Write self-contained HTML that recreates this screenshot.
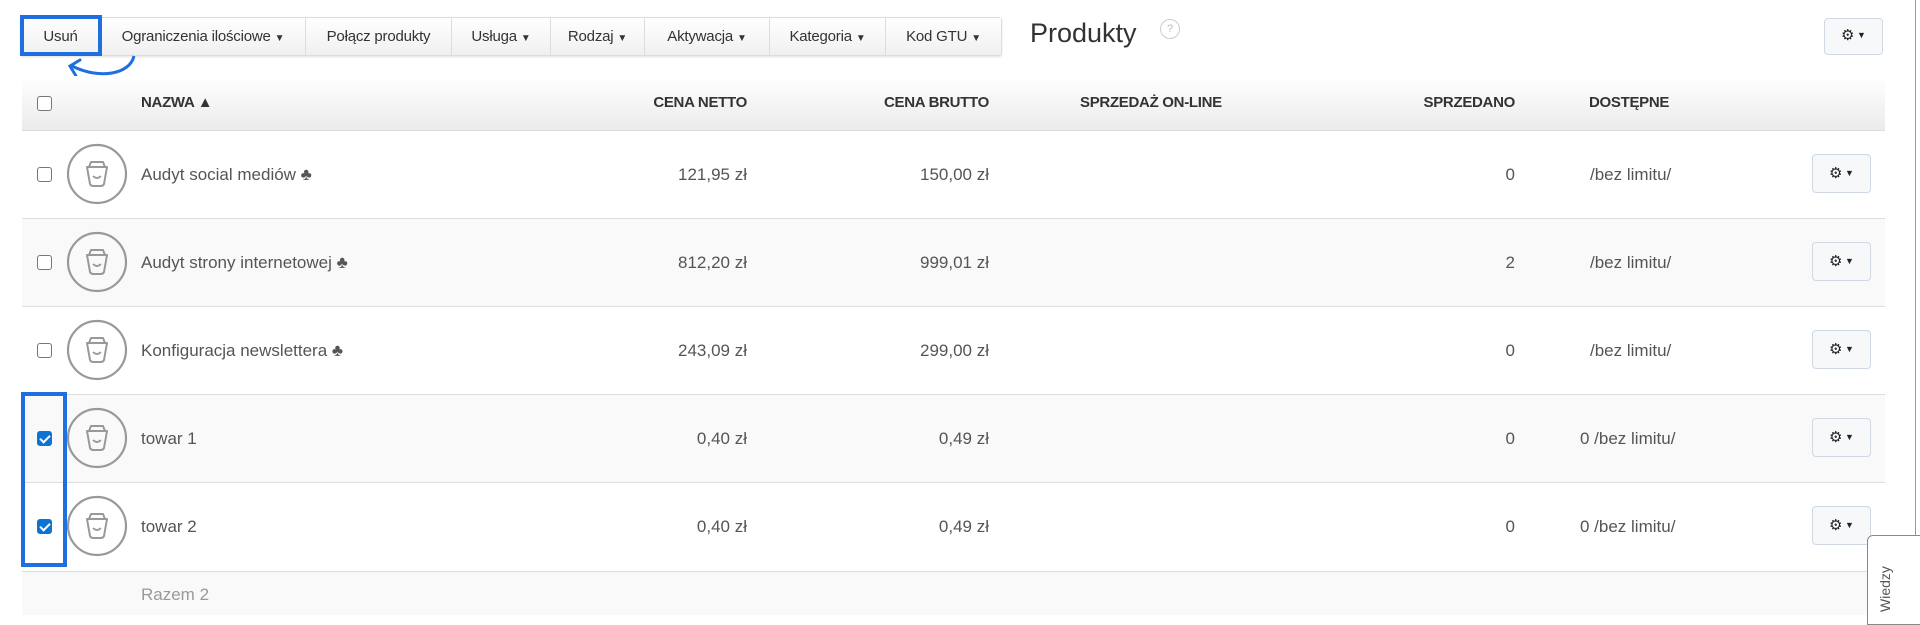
<!DOCTYPE html>
<html><head><meta charset="utf-8"><style>
*{box-sizing:border-box;margin:0;padding:0}
body{width:1920px;height:615px;background:#fff;font-family:"Liberation Sans",Arial,sans-serif;color:#555;position:relative;overflow:hidden}
.abs{position:absolute}
.tb{position:absolute;top:17px;height:39px;left:20px;display:flex;border:1px solid #ddd;border-radius:3px;background:#f5f5f5;box-shadow:0 1px 2px rgba(0,0,0,.12)}
.tb div{height:37px;line-height:37px;font-size:15px;color:#333;text-align:center;border-right:1px solid #ddd;background:linear-gradient(#fff,#f0f0f0);white-space:nowrap;letter-spacing:-0.2px}
.tb div:last-child{border-right:none}
.car{font-size:10px}
.hdr{position:absolute;left:22px;top:76px;width:1863px;height:54px;background:linear-gradient(#fff,#ebebeb)}
.h{position:absolute;top:94px;font-size:15px;font-weight:bold;color:#333;letter-spacing:-0.3px}
.row{position:absolute;left:22px;width:1863px;border-top:1px solid #ddd}
.cb{position:absolute;left:37px;width:15px;height:15px;border:1px solid #777;border-radius:3px;background:#fff}
.cbc{background:#0b74d4;border-color:#0b74d4}
.cbc:after{content:"";position:absolute;left:4px;top:1px;width:4px;height:8px;border:solid #fff;border-width:0 2px 2px 0;transform:rotate(45deg)}
.t{position:absolute;font-size:17px;color:#555}
.gb{position:absolute;width:59px;height:39px;border:1px solid #cfd8e3;border-radius:4px;background:#f6f8fa}
</style></head><body>
<div class="tb">
<div style="width:80px">Usuń</div>
<div style="width:205px">Ograniczenia ilościowe <span class="car">▼</span></div>
<div style="width:146px">Połącz produkty</div>
<div style="width:99px">Usługa <span class="car">▼</span></div>
<div style="width:94px">Rodzaj <span class="car">▼</span></div>
<div style="width:125px">Aktywacja <span class="car">▼</span></div>
<div style="width:116px">Kategoria <span class="car">▼</span></div>
<div style="width:115px">Kod GTU <span class="car">▼</span></div>
</div>
<div class="abs" style="left:20px;top:15px;width:82px;height:41px;border:4px solid #1f6fe0"></div>
<svg class="abs" style="left:50px;top:52px" width="100" height="40"><path d="M84 4 C80 22 50 28 22 14" fill="none" stroke="#1f6fe0" stroke-width="3"/><path d="M30 8 L20 14 L26 24" fill="none" stroke="#1f6fe0" stroke-width="3" stroke-linecap="round"/></svg>
<div class="abs" style="left:1030px;top:18px;font-size:27px;color:#333">Produkty</div>
<div class="abs" style="left:1160px;top:19px;width:20px;height:20px;border:1px solid #ccc;border-radius:50%;font-size:11px;color:#bbb;text-align:center;line-height:18px">?</div>
<div class="gb" style="left:1824px;top:18px;height:37px"></div>
<div class="hdr"></div>
<div class="cb" style="top:96px"></div>
<div class="h" style="left:141px">NAZWA ▲</div>
<div class="h" style="left:600px;width:147px;text-align:right">CENA NETTO</div>
<div class="h" style="left:800px;width:189px;text-align:right">CENA BRUTTO</div>
<div class="h" style="left:1080px">SPRZEDAŻ ON-LINE</div>
<div class="h" style="left:1300px;width:215px;text-align:right">SPRZEDANO</div>
<div class="h" style="left:1589px">DOSTĘPNE</div>
<div id="rows"></div>
<div class="row" style="top:571px;height:44px;background:#f9f9f9"></div>
<div class="t" style="left:141px;top:585px;color:#999">Razem 2</div>
<div class="abs" style="left:21px;top:392px;width:46px;height:175px;border:4px solid #1f6fe0"></div>
<div class="abs" style="left:1915px;top:0;width:1px;height:615px;background:#999"></div>
<div class="abs" style="left:1867px;top:535px;width:60px;height:90px;border:1px solid #888;border-radius:6px 0 0 0;background:#fff"></div>
<div class="abs" style="left:1877px;top:612px;font-size:14px;color:#555;transform:rotate(-90deg);transform-origin:left top">Wiedzy</div>
<script>
var d=[["Audyt social mediów ♣","121,95 zł","150,00 zł","0","/bez limitu/",0],["Audyt strony internetowej ♣","812,20 zł","999,01 zł","2","/bez limitu/",0],["Konfiguracja newslettera ♣","243,09 zł","299,00 zł","0","/bez limitu/",0],["towar 1","0,40 zł","0,49 zł","0","0 /bez limitu/",1],["towar 2","0,40 zł","0,49 zł","0","0 /bez limitu/",1]];
var tops=[130,218,306,394,482],h="";
d.forEach(function(r,i){var t=tops[i],c=t+44;
h+='<div class="row" style="top:'+t+'px;height:89px;background:'+(i%2?'#f9f9f9':'#fff')+'"></div>';
h+='<div class="cb'+(r[5]?' cbc':'')+'" style="top:'+(c-7)+'px"></div>';
h+='<svg class="abs" style="left:66px;top:'+(c-31)+'px" width="62" height="62"><circle cx="31" cy="31" r="29" fill="none" stroke="#999" stroke-width="2.2"/><path d="M21 24 L41 24 L38 41 Q37 43 35 43 L27 43 Q25 43 24 41 Z M23 24 L25 19 L37 19 L39 24" fill="none" stroke="#999" stroke-width="2" stroke-linejoin="round"/><path d="M27 33 Q31 37 35 33" fill="none" stroke="#999" stroke-width="1.8"/></svg>';
h+='<div class="t" style="left:141px;top:'+(c-9)+'px">'+r[0]+'</div>';
h+='<div class="t" style="left:600px;width:147px;text-align:right;top:'+(c-9)+'px">'+r[1]+'</div>';
h+='<div class="t" style="left:800px;width:189px;text-align:right;top:'+(c-9)+'px">'+r[2]+'</div>';
h+='<div class="t" style="left:1400px;width:115px;text-align:right;top:'+(c-9)+'px">'+r[3]+'</div>';
h+='<div class="t" style="left:'+(r[5]?1580:1590)+'px;top:'+(c-9)+'px">'+r[4]+'</div>';
h+='<div class="gb" style="left:1812px;top:'+(c-20)+'px"></div>';
h+='<div class="abs" style="left:1829px;top:'+(c-10)+'px;font-size:15px;color:#222">⚙<span style="font-size:9px;vertical-align:2px"> ▼</span></div>';
});
document.getElementById('rows').innerHTML=h;
</script>
<div class="abs" style="left:1841px;top:26px;font-size:15px;color:#222">⚙<span style="font-size:9px;vertical-align:2px"> ▼</span></div>
</body></html>
